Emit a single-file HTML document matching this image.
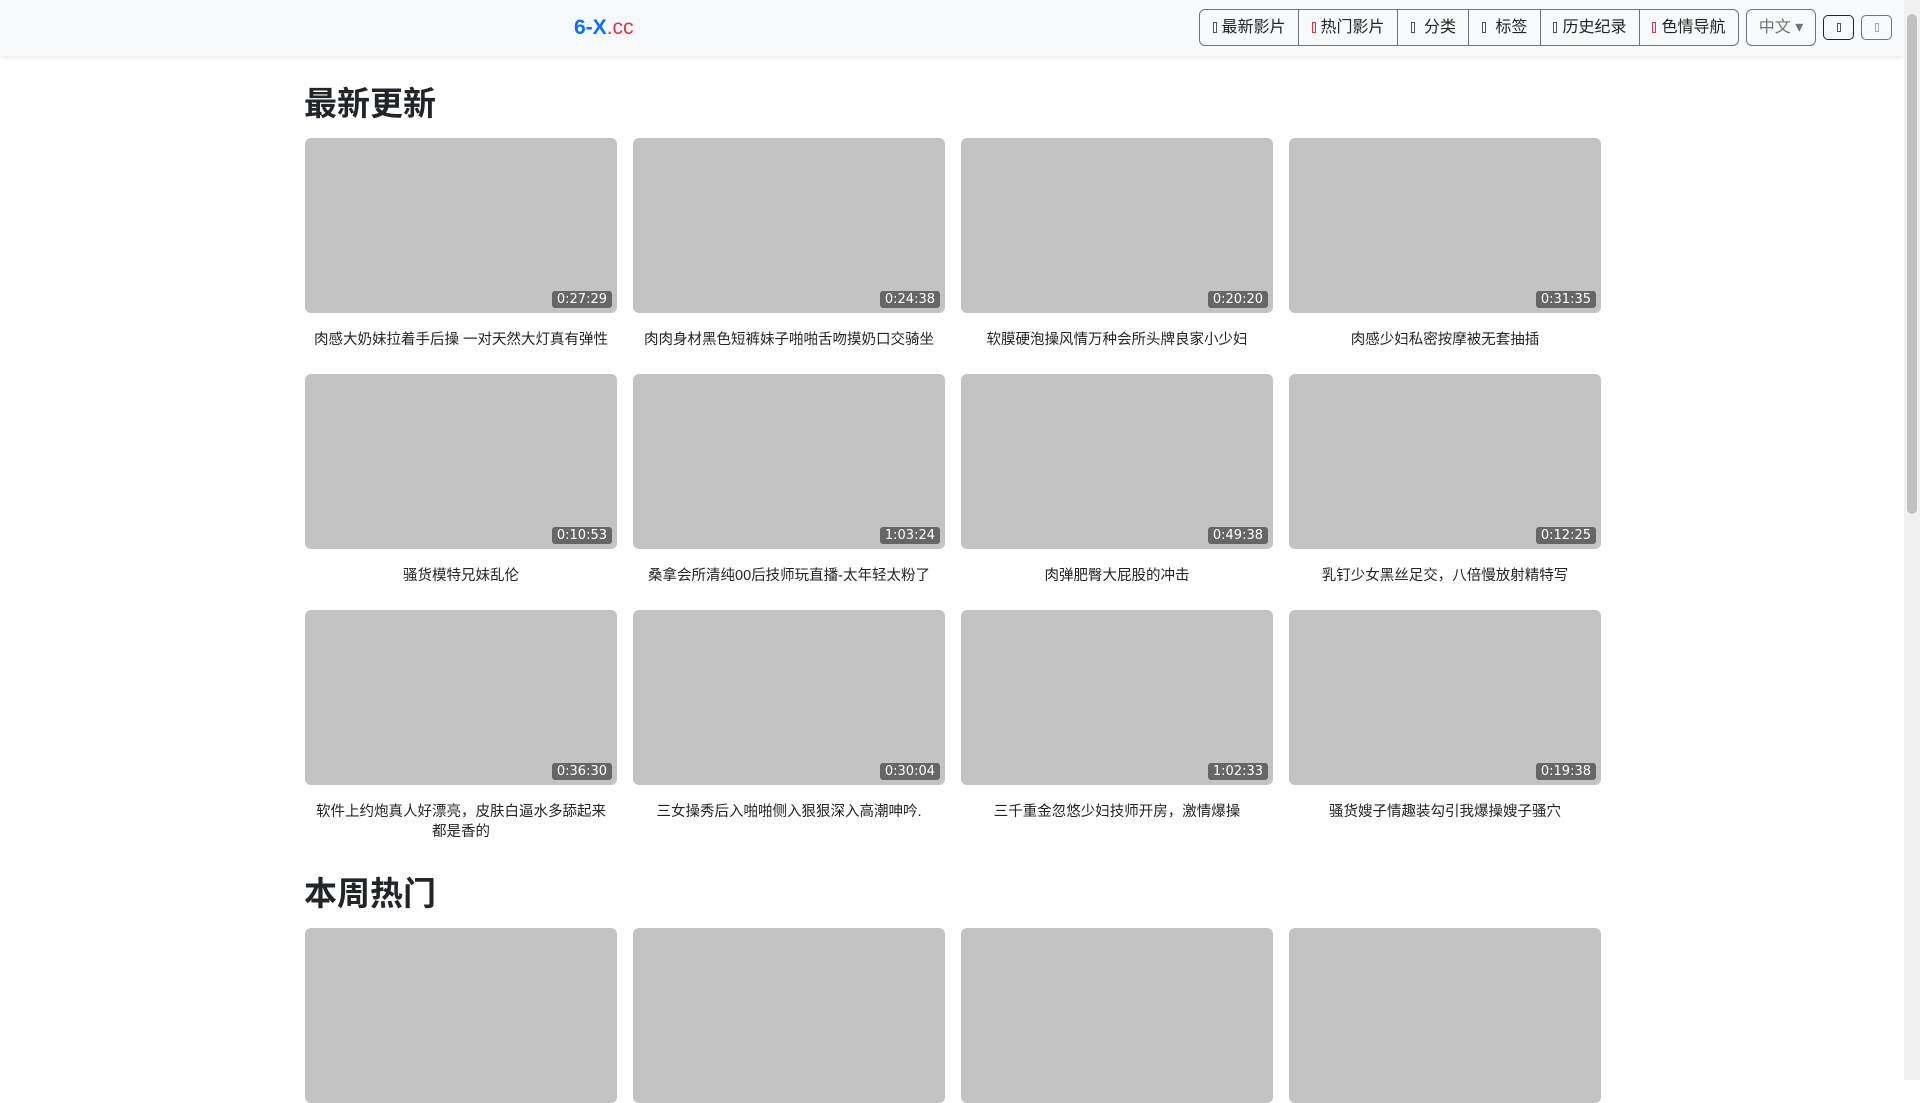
<!DOCTYPE html>
<html><head><meta charset="utf-8"><style>
*{box-sizing:border-box;margin:0;padding:0}
body{width:1920px;height:1080px;overflow:hidden;background:#fff;font-family:"Liberation Sans","Noto Sans CJK SC",sans-serif;color:#212529;position:relative}
.nav{position:absolute;left:0;top:0;width:1904px;height:56px;background:#f8f9fa;box-shadow:0 2px 6px rgba(0,0,0,.08)}
.logo{position:absolute;left:574px;top:14px;font-size:21px;font-weight:bold;color:#0d6efd;line-height:28px}
.logo span{color:#dc3545;font-weight:normal}
.grp{position:absolute;left:1199px;top:9px;height:37px;display:flex;border:1px solid #6c757d;border-radius:6px;overflow:hidden}
.grp div{height:35px;line-height:35px;font-size:16px;padding:0 12.5px;border-left:1px solid #6c757d;color:#212529;white-space:nowrap}
.grp div:first-child{border-left:none}
.ic{display:inline-block;width:4px;height:11px;border:1px solid #555;margin-right:5px;vertical-align:-1px}
.ic.r{border-color:#dc3545}
.lang{position:absolute;left:1746px;top:9px;width:70px;height:37px;border:1px solid #6c757d;border-radius:6px;font-size:16px;line-height:35px;color:#6c757d;text-align:center}
.sb{position:absolute;top:15px;width:31px;height:25px;border:1px solid #212529;border-radius:5px}
.sb i{position:absolute;left:13px;top:7px;width:4px;height:9px;border:1px solid #555}
.scroll{position:absolute;right:0;top:0;width:16px;height:1080px;background:#f1f1f1}
.scroll div{position:absolute;left:3px;top:14px;width:10px;height:500px;background:#c1c1c1;border-radius:5px}
h2{position:absolute;left:304px;font-size:33px;font-weight:600;line-height:40px}
.th{position:absolute;width:312px;height:175px;background:#c3c3c3;border-radius:6px}
.th b{position:absolute;right:5px;bottom:5px;background:#666;color:#fff;font-family:"DejaVu Sans",sans-serif;font-weight:normal;font-size:13px;line-height:17px;padding:0 5px;border-radius:3px}
.t{position:absolute;width:312px;text-align:center;font-size:14.5px;line-height:20px;padding:0 6px}
</style></head><body>
<div class="nav">
<div class="logo">6-X<span>.cc</span></div>
<div class="grp"><div><i class="ic"></i>最新影片</div><div><i class="ic r"></i>热门影片</div><div><i class="ic"></i> 分类</div><div><i class="ic"></i> 标签</div><div><i class="ic"></i>历史纪录</div><div><i class="ic r"></i>色情导航</div></div>
<div class="lang">中文 ▾</div>
<div class="sb" style="left:1823px"><i></i></div>
<div class="sb" style="left:1861px;border-color:#6c757d"><i style="border-color:#aaa"></i></div>
</div>
<div class="scroll"><div></div></div>
<h2 style="top:84px">最新更新</h2>
<h2 style="top:874px">本周热门</h2>

<div class="th" style="left:305px;top:138px"><b>0:27:29</b></div>
<div class="th" style="left:633px;top:138px"><b>0:24:38</b></div>
<div class="th" style="left:961px;top:138px"><b>0:20:20</b></div>
<div class="th" style="left:1289px;top:138px"><b>0:31:35</b></div>
<div class="t" style="left:305px;top:330px">肉感大奶妹拉着手后操 一对天然大灯真有弹性</div>
<div class="t" style="left:633px;top:330px">肉肉身材黑色短裤妹子啪啪舌吻摸奶口交骑坐</div>
<div class="t" style="left:961px;top:330px">软膜硬泡操风情万种会所头牌良家小少妇</div>
<div class="t" style="left:1289px;top:330px">肉感少妇私密按摩被无套抽插</div>

<div class="th" style="left:305px;top:374px"><b>0:10:53</b></div>
<div class="th" style="left:633px;top:374px"><b>1:03:24</b></div>
<div class="th" style="left:961px;top:374px"><b>0:49:38</b></div>
<div class="th" style="left:1289px;top:374px"><b>0:12:25</b></div>
<div class="t" style="left:305px;top:566px">骚货模特兄妹乱伦</div>
<div class="t" style="left:633px;top:566px">桑拿会所清纯00后技师玩直播-太年轻太粉了</div>
<div class="t" style="left:961px;top:566px">肉弹肥臀大屁股的冲击</div>
<div class="t" style="left:1289px;top:566px">乳钉少女黑丝足交，八倍慢放射精特写</div>

<div class="th" style="left:305px;top:610px"><b>0:36:30</b></div>
<div class="th" style="left:633px;top:610px"><b>0:30:04</b></div>
<div class="th" style="left:961px;top:610px"><b>1:02:33</b></div>
<div class="th" style="left:1289px;top:610px"><b>0:19:38</b></div>
<div class="t" style="left:305px;top:802px;padding:0 8px">软件上约炮真人好漂亮，皮肤白逼水多舔起来都是香的</div>
<div class="t" style="left:633px;top:802px">三女操秀后入啪啪侧入狠狠深入高潮呻吟.</div>
<div class="t" style="left:961px;top:802px">三千重金忽悠少妇技师开房，激情爆操</div>
<div class="t" style="left:1289px;top:802px">骚货嫂子情趣装勾引我爆操嫂子骚穴</div>

<div class="th" style="left:305px;top:928px"></div>
<div class="th" style="left:633px;top:928px"></div>
<div class="th" style="left:961px;top:928px"></div>
<div class="th" style="left:1289px;top:928px"></div>
</body></html>
